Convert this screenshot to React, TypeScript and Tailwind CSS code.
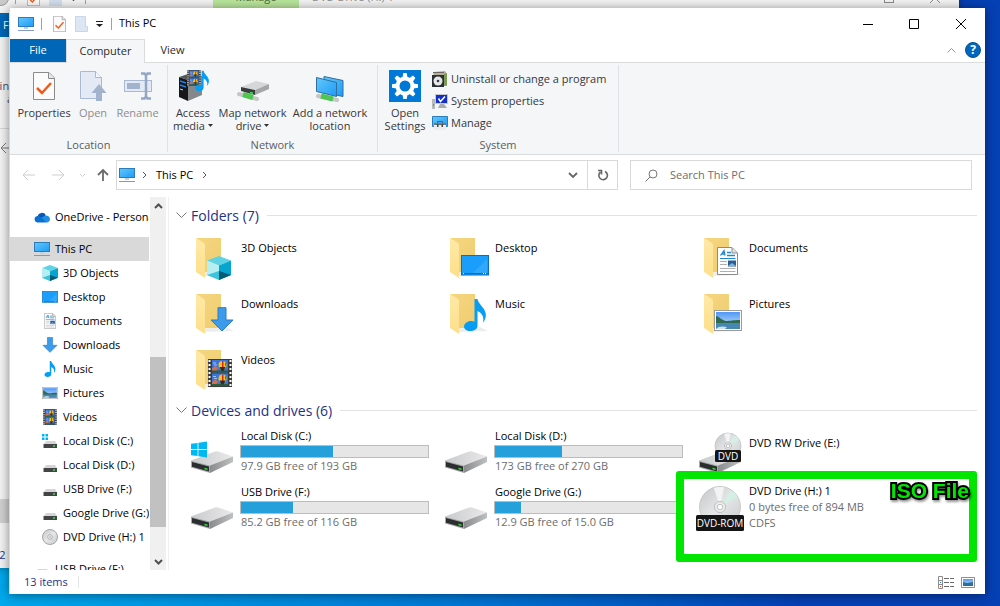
import type { ReactNode, SVGProps } from "react";

type IconProps = SVGProps<SVGSVGElement>;

/* ---------- shared gradients ---------- */

function Gradients() {
  return (
    <svg className="absolute h-0 w-0" aria-hidden="true">
      <defs>
        <linearGradient id="screen" x1="0" y1="0" x2="1" y2="1">
          <stop offset="0" stopColor="#63c8fb" />
          <stop offset="1" stopColor="#1e9bf5" />
        </linearGradient>
        <linearGradient id="folderBack" x1="0" y1="0" x2="1" y2="1">
          <stop offset="0" stopColor="#f5d680" />
          <stop offset="1" stopColor="#efcc70" />
        </linearGradient>
        <linearGradient id="folderFront" x1="0" y1="0" x2="0" y2="1">
          <stop offset="0" stopColor="#ffe9a6" />
          <stop offset="1" stopColor="#fddf8a" />
        </linearGradient>
        <linearGradient id="driveTop" x1="0" y1="0" x2="1" y2="0">
          <stop offset="0" stopColor="#c9cacc" />
          <stop offset="1" stopColor="#e9e9ea" />
        </linearGradient>
        <linearGradient id="driveSide" x1="0" y1="0" x2="1" y2="0">
          <stop offset="0" stopColor="#8a8b8d" />
          <stop offset="1" stopColor="#bfc0c2" />
        </linearGradient>
        <linearGradient id="disc" x1="0" y1="0" x2="1" y2="1">
          <stop offset="0" stopColor="#c4c6c8" />
          <stop offset="0.5" stopColor="#e4e6e7" />
          <stop offset="1" stopColor="#c6c8ca" />
        </linearGradient>
        <linearGradient id="sky" x1="0" y1="0" x2="0" y2="1">
          <stop offset="0" stopColor="#4f97f5" />
          <stop offset="1" stopColor="#d6eafb" />
        </linearGradient>
      </defs>
    </svg>
  );
}

/* ---------- small glyphs ---------- */

function MonitorIcon(props: IconProps) {
  return (
    <svg viewBox="0 0 16 16" width="16" height="16" {...props}>
      <rect x="0.5" y="1.5" width="15" height="9" fill="url(#screen)" stroke="#2b7cb8" />
      <path d="M6 11h4v2H6z" fill="#b9d3e6" />
      <path d="M0 14.5h16" stroke="#7f9cba" />
    </svg>
  );
}

function CheckPageIcon(props: IconProps) {
  return (
    <svg viewBox="0 0 22 28" {...props}>
      <path d="M.5.5h15.500l5.500 5.500v21.500H.5z" fill="#fbfbfb" stroke="#8b8b8b" />
      <path d="M15.500.5v6h6" fill="#e8e8e8" stroke="#8b8b8b" />
      <path d="M4 16l5 5 9-10" fill="none" stroke="#ee5a1c" strokeWidth="2.500" />
    </svg>
  );
}

function OpenPageIcon(props: IconProps) {
  return (
    <svg viewBox="0 0 28 30" {...props}>
      <path d="M1.500.5h15l6 6v21h-21z" fill="#e3eaf5" stroke="#a9b9d4" />
      <path d="M16.500.5v6h6" fill="#f4f7fb" stroke="#a9b9d4" />
      <path d="M20 13l7.500 9H23v8h-6v-8h-4.500z" fill="#a3b2cd" />
    </svg>
  );
}

function RenameIcon(props: IconProps) {
  return (
    <svg viewBox="0 0 28 28" {...props}>
      <rect x="0.5" y="8.500" width="27" height="11" fill="#e3eaf5" stroke="#a9b9d4" />
      <rect x="3" y="11" width="13" height="6" fill="#a3b2cd" />
      <path d="M17 1.500h3.500L22 3.500l1.500-2H27M17 26.500h3.500l1.500-2 1.500 2H27M22 3v22" fill="none" stroke="#94a6c6" strokeWidth="2.500" />
    </svg>
  );
}

function CubeIcon(props: IconProps) {
  return (
    <svg viewBox="0 0 24 24" width="16" height="16" {...props}>
      <path d="M12 0l12 4.500-12 5L0 4.500z" fill="#5fd3e6" />
      <path d="M0 4.500l12 5V24L0 19z" fill="#b5eef3" />
      <path d="M24 4.500l-12 5V24l12-5z" fill="#06a5cf" />
      <path d="M0 19l12-4v9z" fill="#3bc4dc" />
      <path d="M24 19l-12-4v9z" fill="#045c76" />
    </svg>
  );
}

function DesktopIcon(props: IconProps) {
  return (
    <svg viewBox="0 0 28 21" width="16" height="12" {...props}>
      <rect x="0.5" y="0.5" width="27" height="19.500" fill="#1a9dfb" stroke="#0a6fbe" />
      <path d="M12 18L26 4v14z" fill="#3fb0ff" opacity=".6" />
      <path d="M1 18.500h26" stroke="#0a6fbe" />
      <path d="M2 18.500h1M22 18.500h1M24 18.500h1" stroke="#fff" />
    </svg>
  );
}

function DocumentIcon(props: IconProps) {
  return (
    <svg viewBox="0 0 21 28" width="12" height="16" {...props}>
      <path d="M.5.500h14.500l5.500 5.500v21.500H.5z" fill="#fff" stroke="#8a8a8a" />
      <path d="M15 1v5h5" fill="#e4e4e4" stroke="#8a8a8a" />
      <path d="M3.500 8.500L7 3.500l1 5M4.500 7H8M10 5.500h4M10 8.500h8" fill="none" stroke="#2586cf" strokeWidth="1.300" />
      <path d="M3 11.500h15.500" stroke="#2586cf" />
      <rect x="11" y="13.500" width="8" height="6" fill="#2a5f95" />
      <path d="M11 19l4-3 4 3z" fill="#7fb8d8" />
      <path d="M3 14.500h7M3 17.500h7M3 21.500h15.500M3 24.500h15.500" stroke="#b0b0b0" />
    </svg>
  );
}

function DownloadIcon(props: IconProps) {
  return (
    <svg viewBox="0 0 24 25" width="16" height="16" {...props}>
      <path d="M8 .7h8V13h7L12 24 1 13h7z" fill="#3c9bea" stroke="#2a7cc8" />
    </svg>
  );
}

function MusicIcon(props: IconProps) {
  return (
    <svg viewBox="0 0 22 32" width="12" height="16" {...props}>
      <path
        d="M10.500 0h3c.6 5 7.500 8.500 8.300 15 .3 3.600-1 6.700-3 9 1.700-5.500-.6-10-5.300-12V27c0 3-3.500 5-7.300 5C2.500 32 0 30 0 27.500 0 24.500 3.500 22 7 22c1.300 0 2.500.2 3.500.6z"
        fill="#079df5"
      />
    </svg>
  );
}

function PictureIcon(props: IconProps) {
  return (
    <svg viewBox="0 0 28 21" width="16" height="12" {...props}>
      <rect x="0.5" y="0.5" width="27" height="20" fill="#fff" stroke="#9b9b9b" />
      <rect x="2" y="2" width="24" height="17" fill="url(#sky)" />
      <path d="M2 6c3 0 5 4 10 5 4 0 7-1 14-1v4H2z" fill="#2f6a50" />
      <path d="M2 13h24v6H2z" fill="#4688b4" />
      <path d="M2 19c2-3 7-3 11-2l-2 2z" fill="#cfe0ea" />
    </svg>
  );
}

function Balloon({ y }: { y: number }) {
  return (
    <g>
      <rect x="4" y={y} width="16" height="12.500" fill="#3f74d8" />
      <path d={`M4 ${y + 9}l3-3 3 2-2 3H4z`} fill="#dd6f3e" />
      <path d={`M4 ${y + 10.500}h16v2H4z`} fill="#27603f" />
      <circle cx="14.500" cy={y + 5} r="4" fill="#efc51d" />
      <path d={`M14 ${y + 1}h1.500v7H14zM17 ${y + 2}l1.200 2-1.200 3z`} fill="#d4282a" />
      <path d={`M11.500 ${y + 7}h6l-2 4h-2z`} fill="#3a2b20" />
      <path d={`M5 ${y + 3}h3M6 ${y + 5}h3`} stroke="#9fc4f4" />
    </g>
  );
}

function VideoIcon(props: IconProps) {
  return (
    <svg viewBox="0 0 24 28" width="14" height="16" {...props}>
      <path d="M0 0h24v28H0z" fill="#3c3c3c" />
      <Balloon y={1} />
      <Balloon y={14.5} />
      <path d="M1.500 1v26M22.500 1v26" stroke="#fff" strokeWidth="2" strokeDasharray="2 2" />
    </svg>
  );
}

function WindowsLogo(props: IconProps) {
  return (
    <svg viewBox="0 0 16 16" {...props}>
      <path d="M0 2.300l6.600-.9v6.200H0zM7.400 1.300L16 0v7.600H7.400zM0 8.400h6.600v6.200L0 13.700zM7.400 8.400H16V16l-8.600-1.200z" fill="#00b9f2" />
    </svg>
  );
}

function SmallDriveIcon({ system = false }: { system?: boolean }) {
  return (
    <svg viewBox="0 0 16 16" width="16" height="16" aria-hidden="true">
      <path d="M4 8h9l2 3H2z" fill="#d5d6d7" />
      <path d="M1.500 11h13.500v4H1.500z" fill="#434446" />
      <path d="M11 13h2" stroke="#35e04a" strokeWidth="1.500" />
      {system && <path d="M0 1h2.500v2.500H0zM3.500 1H6v2.500H3.500zM0 4.500h2.500V7H0zM3.500 4.500H6V7H3.500z" fill="#00b4f0" />}
    </svg>
  );
}

function SmallDiscIcon() {
  return (
    <svg viewBox="0 0 16 16" width="16" height="16" aria-hidden="true">
      <circle cx="8" cy="8" r="7.500" fill="url(#disc)" stroke="#a4a4a4" />
      <circle cx="8" cy="8" r="2.300" fill="#f4f4f4" stroke="#b0b0b0" />
      <circle cx="8" cy="8" r="0.8" fill="#999" />
    </svg>
  );
}

function CloudIcon() {
  return (
    <svg viewBox="0 0 16 11" width="16" height="11" aria-hidden="true">
      <path d="M3.500 4.200A4.600 4.600 0 0 1 11.800 3L8 8 2 6z" fill="#0a57b5" />
      <path d="M11.500 3.500A4 4 0 0 1 16 7c0 2-1.500 3.500-3.300 3.500L6 6.500z" fill="#1f8fe6" />
      <path d="M3.300 4c2-.3 3.200.5 9.400 6.500H3.400A3.300 3.300 0 0 1 3.300 4z" fill="#0b6fcf" />
    </svg>
  );
}

/* ---------- 48px tile icons ---------- */

function FolderIcon({ children }: { children?: ReactNode }) {
  return (
    <svg viewBox="0 0 48 48" width="48" height="48" aria-hidden="true">
      <path d="M17 44l29-1-8-4H17z" fill="#000" opacity=".07" />
      <path d="M8 6h25v34H17z" fill="url(#folderBack)" />
      <path d="M8 6l8 5q1 .8 1 2.500V46l-9-6z" fill="url(#folderFront)" />
      {children}
    </svg>
  );
}

function DriveShape() {
  return (
    <g>
      <path d="M3 33.500L27 24.500q1.500-.6 3 0L45 29.500 22 38.500z" fill="url(#driveTop)" />
      <path d="M22 38.500l23-9V35L22 46z" fill="url(#driveSide)" />
      <path d="M3 33.500l19 5V46L3 40.500z" fill="#a8a9ab" />
      <path d="M4 35l17 4.500v5L4 39.700z" fill="#2c2d2f" />
      <path d="M16.500 40.800l3 .8v1.400l-3-.8z" fill="#36e23c" />
    </g>
  );
}

function DriveIcon({ system = false }: { system?: boolean }) {
  return (
    <svg viewBox="0 0 48 48" width="48" height="48" aria-hidden="true">
      <DriveShape />
      {system && <WindowsLogo x="3" y="14" width="16" height="17" />}
    </svg>
  );
}

function Disc({ cx, cy, r }: { cx: number; cy: number; r: number }) {
  return (
    <g>
      <circle cx={cx} cy={cy} r={r} fill="url(#disc)" stroke="#bfc1c3" strokeWidth="0.8" />
      <path d={`M${cx} ${cy}L${cx + r * 0.55} ${cy - r * 0.8}A${r} ${r} 0 0 1 ${cx + r * 0.85} ${cy - r * 0.5}z`} fill="#d3f0e2" />
      <path d={`M${cx} ${cy}L${cx - r * 0.3} ${cy - r * 0.93}A${r} ${r} 0 0 1 ${cx + r * 0.2} ${cy - r * 0.96}z`} fill="#f2f3f3" />
      <circle cx={cx} cy={cy} r={r * 0.27} fill="#ececec" stroke="#b5b5b5" strokeWidth="0.8" />
      <circle cx={cx} cy={cy} r={r * 0.13} fill="#fff" stroke="#b5b5b5" strokeWidth="0.8" />
    </g>
  );
}

function DvdDriveIcon() {
  return (
    <svg viewBox="0 0 48 48" width="48" height="48" aria-hidden="true">
      <DriveShape />
      <Disc cx={32} cy={19} r={13} />
      <rect x="19" y="23" width="26" height="12" rx="1.500" fill="#151515" />
      <text x="32" y="33" textAnchor="middle" fontSize="10" fill="#fff" fontFamily="'Open Sans', sans-serif">
        DVD
      </text>
    </svg>
  );
}

function DvdRomIcon() {
  return (
    <svg viewBox="0 0 48 48" width="48" height="48" aria-hidden="true">
      <Disc cx={24} cy={24} r={20.5} />
      <rect x="0" y="32" width="48" height="16" rx="1.500" fill="#151515" />
      <text x="24" y="44" textAnchor="middle" fontSize="10" fill="#fff" fontFamily="'Open Sans', sans-serif">
        DVD-ROM
      </text>
    </svg>
  );
}

/* ---------- ribbon icons ---------- */

function AccessMediaIcon() {
  return (
    <svg viewBox="0 0 32 32" width="32" height="32" aria-hidden="true">
      <path d="M2 7l9 3v21l-9-4z" fill="#15171a" />
      <path d="M11 10l14-4v19l-14 6z" fill="#85888b" />
      <path d="M2 7l12-4 11 3-14 4z" fill="#55585b" />
      <path d="M3 11l6 2M3 15l6 2" stroke="#1f80f0" strokeWidth="1.500" />
      <path d="M3 19l3 1" stroke="#cfd8e0" />
      <VideoIcon x="9" y="0" width="16" height="16" />
      <MusicIcon x="18" y="0" width="14" height="22" />
    </svg>
  );
}

function MapDriveIcon() {
  return (
    <svg viewBox="0 0 32 32" width="32" height="32" aria-hidden="true">
      <path d="M2 24l18 5" stroke="#c4c6c8" strokeWidth="4" strokeLinecap="round" />
      <path d="M6 24.500l10 3" stroke="#4fc64f" strokeWidth="5" />
      <path d="M4 17L19 11l13 3-14 6z" fill="#d6d7d9" />
      <path d="M18 20l14-6v5l-14 6z" fill="#a4a6a8" />
      <path d="M4 17l14 3v5L4 21z" fill="#3a3c3f" />
      <path d="M13 22.500l3 .7" stroke="#3be04a" strokeWidth="1.500" />
    </svg>
  );
}

function AddLocationIcon() {
  return (
    <svg viewBox="0 0 32 32" width="32" height="32" aria-hidden="true">
      <path d="M10 6.500l19 4v16l-19-4z" fill="url(#screen)" stroke="#2f6e9e" />
      <path d="M4 26l19 4" stroke="#c4c6c8" strokeWidth="4" strokeLinecap="round" />
      <path d="M7 26l12 3" stroke="#4fc64f" strokeWidth="5" />
      <path d="M2.500 7.500l20 5v14l-20-5z" fill="url(#screen)" stroke="#2f6e9e" />
    </svg>
  );
}

function SettingsIcon() {
  const teeth = [0, 45, 90, 135, 180, 225, 270, 315];
  return (
    <svg viewBox="0 0 32 32" width="32" height="32" aria-hidden="true">
      <path d="M0 0h32v32H0z" fill="#0078d7" />
      <circle cx="16" cy="16" r="7.500" fill="none" stroke="#fff" strokeWidth="4" />
      {teeth.map((deg) => (
        <path key={deg} d="M13.500 7.500l.8-4.500h3.400l.8 4.500z" fill="#fff" transform={`rotate(${deg} 16 16)`} />
      ))}
    </svg>
  );
}

function UninstallIcon() {
  return (
    <svg viewBox="0 0 16 16" width="16" height="16" aria-hidden="true">
      <path d="M1 1l12-1 2 3v12H4z" fill="#b9ad93" />
      <path d="M12 3l3-1v12l-3 1z" fill="#7c9a55" />
      <path d="M0 4h12v12H0z" fill="#2c2f33" />
      <circle cx="6" cy="10" r="4.500" fill="#e6e8ea" />
      <circle cx="6" cy="10" r="1.300" fill="#34383c" />
      <path d="M1 1.500h11" stroke="#6a6a6a" />
    </svg>
  );
}

function SystemPropsIcon() {
  return (
    <svg viewBox="0 0 16 16" width="16" height="16" aria-hidden="true">
      <path d="M0 6h3v10H0z" fill="#b7babd" />
      <path d="M1 12h1" stroke="#38c048" strokeWidth="2" />
      <path d="M3.500 1.500h12v9h-12z" fill="#1430c4" stroke="#c6c9cc" />
      <path d="M6.500 5.500l2 3L13 3.500" fill="none" stroke="#fff" strokeWidth="1.500" />
      <path d="M8 11h4l3 4H6z" fill="#a9acaf" />
    </svg>
  );
}

function ManageIcon() {
  return (
    <svg viewBox="0 0 16 16" width="16" height="16" aria-hidden="true">
      <path d="M.5 1.500h15v10H.5z" fill="url(#screen)" stroke="#2b7cb8" />
      <path d="M5.500 8V6.500h5V8" fill="none" stroke="#5c5f62" />
      <path d="M2 8h12v7H2z" fill="#74777a" />
      <path d="M2 10h12v5H2z" fill="#eceded" />
      <path d="M5 9h1.500v3H5zM9.500 9H11v3H9.500z" fill="#45484b" />
    </svg>
  );
}

function Chevron({ className, d = "M1 1l4 4 4-4", w = 10, h = 6 }: { className?: string; d?: string; w?: number; h?: number }) {
  return (
    <svg className={className} viewBox={`0 0 ${w} ${h}`} width={w} height={h} fill="none" stroke="currentColor" aria-hidden="true">
      <path d={d} />
    </svg>
  );
}

/* ---------- window parts ---------- */

function TitleBar({ title }: { title: string }) {
  return (
    <header className="flex h-[31px] shrink-0 items-center pl-2">
      <MonitorIcon className="shrink-0" />
      <span className="ml-[7px] h-3 w-px bg-gray-400" />
      <button type="button" aria-label="Properties" className="ml-[11px]">
        <CheckPageIcon width="13" height="16" />
      </button>
      <button type="button" aria-label="New folder" className="ml-[9px]">
        <svg viewBox="0 0 13 16" width="13" height="16" aria-hidden="true">
          <path d="M.5.5h10v10h2v5H.5z" fill="#dde6f3" stroke="#c9d6ea" />
        </svg>
      </button>
      <button type="button" aria-label="Customize toolbar" className="ml-2">
        <svg viewBox="0 0 7 6" width="7" height="6" aria-hidden="true">
          <path d="M0 0h7v1H0zM0 3h7L3.500 6z" fill="#222" />
        </svg>
      </button>
      <span className="ml-2 h-3 w-px bg-gray-400" />
      <h1 className="ml-[7px] text-[11px] whitespace-nowrap text-black">{title}</h1>
      <div className="ml-auto flex h-full">
        <button type="button" aria-label="Minimize" className="grid w-[46px] place-items-center">
          <Chevron d="M0 5.500h10" h={10} />
        </button>
        <button type="button" aria-label="Maximize" className="grid w-[46px] place-items-center">
          <Chevron d="M.5.5h9v9h-9z" h={10} />
        </button>
        <button type="button" aria-label="Close" className="grid w-12 place-items-center">
          <Chevron d="M0 0l10 10M10 0L0 10" h={10} />
        </button>
      </div>
    </header>
  );
}

function BigButton({ icon, lines, menu, className }: { icon: ReactNode; lines: string[]; menu?: boolean; className: string }) {
  return (
    <button type="button" className={`flex flex-col items-center pt-[3px] ${className}`}>
      <span className="grid h-8 w-8 place-items-center">{icon}</span>
      <span className="mt-1 flex flex-col items-center text-[11px] leading-[13px] whitespace-nowrap">
        {lines.map((line, i) => (
          <span key={line} className="flex items-center">
            {line}
            {menu && i === lines.length - 1 && (
              <svg className="ml-[3px]" viewBox="0 0 5 3" width="5" height="3" aria-hidden="true">
                <path d="M0 0h5L2.500 3z" fill="#333" />
              </svg>
            )}
          </span>
        ))}
      </span>
    </button>
  );
}

function RibbonGroup({ label, className, children }: { label: string; className: string; children: ReactNode }) {
  return (
    <section className={`flex shrink-0 flex-col pt-1 ${className}`}>
      <div className="flex flex-1">{children}</div>
      <h2 className="text-center text-[11px] leading-[18px] text-[#5a5d61]">{label}</h2>
    </section>
  );
}

function GroupDivider() {
  return <span className="my-[2px] w-px shrink-0 bg-[#dfe1e4]" />;
}

const systemLinks = [
  { label: "Uninstall or change a program", icon: <UninstallIcon /> },
  { label: "System properties", icon: <SystemPropsIcon /> },
  { label: "Manage", icon: <ManageIcon /> },
];

function Ribbon() {
  return (
    <div className="flex h-[92px] shrink-0 border-b border-[#dadbdc] bg-[#f5f6f7] text-[#35383c]">
      <RibbonGroup label="Location" className="w-[157px] px-[6px]">
        <BigButton className="w-14" icon={<CheckPageIcon width="22" height="28" />} lines={["Properties"]} />
        <BigButton className="w-[42px] text-[#8b8d91]" icon={<OpenPageIcon width="28" height="30" />} lines={["Open"]} />
        <BigButton className="w-[47px] text-[#8b8d91]" icon={<RenameIcon width="28" height="28" />} lines={["Rename"]} />
      </RibbonGroup>
      <GroupDivider />
      <RibbonGroup label="Network" className="w-[209px] px-[3px]">
        <BigButton className="w-11" icon={<AccessMediaIcon />} lines={["Access", "media"]} menu />
        <BigButton className="w-[75px]" icon={<MapDriveIcon />} lines={["Map network", "drive"]} menu />
        <BigButton className="w-20" icon={<AddLocationIcon />} lines={["Add a network", "location"]} />
      </RibbonGroup>
      <GroupDivider />
      <RibbonGroup label="System" className="w-[240px] px-[6px]">
        <BigButton className="w-[42px]" icon={<SettingsIcon />} lines={["Open", "Settings"]} />
        <ul className="mt-px ml-[6px]">
          {systemLinks.map((l) => (
            <li key={l.label}>
              <button type="button" className="flex h-[22px] items-center gap-[3px] text-[11px] whitespace-nowrap">
                {l.icon}
                {l.label}
              </button>
            </li>
          ))}
        </ul>
      </RibbonGroup>
      <GroupDivider />
    </div>
  );
}

function NavBar() {
  return (
    <div className="flex h-[42px] shrink-0 items-start pt-[5px] pr-[13px] pl-3 text-[11px]">
      <div className="flex h-[30px] w-[94px] shrink-0 items-center text-[#6b6b6b]">
        <button type="button" aria-label="Back" className="text-[#cfcfcf]">
          <Chevron d="M13 6H1M6 1L1 6l5 5" w={14} h={12} />
        </button>
        <button type="button" aria-label="Forward" className="ml-4 text-[#cfcfcf]">
          <Chevron d="M0 6h12M7 1l5 5-5 5" w={14} h={12} />
        </button>
        <button type="button" aria-label="Recent locations" className="ml-[13px] text-[#cfcfcf]">
          <Chevron d="M1 1l2.500 2.500L6 1" w={7} h={5} />
        </button>
        <button type="button" aria-label="Up" className="ml-[10px]">
          <svg viewBox="0 0 14 14" width="14" height="14" fill="none" stroke="currentColor" strokeWidth="1.800" aria-hidden="true">
            <path d="M7 13V2M2 7l5-5 5 5" />
          </svg>
        </button>
      </div>
      <div className="flex h-[30px] min-w-0 flex-[498] items-center border border-[#d9d9d9] pl-[2px]">
        <MonitorIcon className="shrink-0" />
        <Chevron className="ml-[7px] text-[#555]" d="M1 1l3 3-3 3" w={5} h={8} />
        <a href="#this-pc" className="ml-[9px] text-black">This PC</a>
        <Chevron className="ml-[9px] text-[#555]" d="M1 1l3 3-3 3" w={5} h={8} />
        <button type="button" aria-label="Previous locations" className="ml-auto grid h-full w-7 place-items-center text-[#666]">
          <svg viewBox="0 0 10 6" width="10" height="6" fill="none" stroke="currentColor" strokeWidth="1.800" aria-hidden="true">
            <path d="M1 1l4 4 4-4" />
          </svg>
        </button>
        <button type="button" aria-label="Refresh" className="grid h-full w-[30px] place-items-center border-l border-[#d9d9d9] text-[#666]">
          <svg viewBox="0 0 12 12" width="12" height="12" fill="none" stroke="currentColor" strokeWidth="1.600" aria-hidden="true">
            <path d="M8 2.500A4.300 4.300 0 1 1 3.500 3" />
            <path d="M1 1.500h3.500V5.500" />
          </svg>
        </button>
      </div>
      <label className="ml-3 flex h-[30px] min-w-0 flex-[326] items-center border border-[#d9d9d9] pl-[14px] text-[#777]">
        <svg viewBox="0 0 13 13" width="13" height="13" fill="none" stroke="currentColor" aria-hidden="true">
          <circle cx="8" cy="5" r="4" />
          <path d="M5 8l-4.500 4.500" />
        </svg>
        <input type="search" aria-label="Search This PC" placeholder="Search This PC" className="ml-3 min-w-0 flex-1 bg-transparent outline-none placeholder:text-[#6d6d6d]" />
      </label>
    </div>
  );
}

const pcItems = [
  { label: "3D Objects", icon: <CubeIcon /> },
  { label: "Desktop", icon: <DesktopIcon /> },
  { label: "Documents", icon: <DocumentIcon /> },
  { label: "Downloads", icon: <DownloadIcon /> },
  { label: "Music", icon: <MusicIcon /> },
  { label: "Pictures", icon: <PictureIcon /> },
  { label: "Videos", icon: <VideoIcon /> },
  { label: "Local Disk (C:)", icon: <SmallDriveIcon system /> },
  { label: "Local Disk (D:)", icon: <SmallDriveIcon /> },
  { label: "USB Drive (F:)", icon: <SmallDriveIcon /> },
  { label: "Google Drive (G:)", icon: <SmallDriveIcon /> },
  { label: "DVD Drive (H:) 1", icon: <SmallDiscIcon /> },
];

function TreeItem({ icon, label, className }: { icon: ReactNode; label: string; className: string }) {
  return (
    <a href="#item" className={`flex h-6 items-center gap-[5px] text-[11px] whitespace-nowrap text-black ${className}`}>
      <span className="grid h-4 w-4 shrink-0 place-items-center">{icon}</span>
      {label}
    </a>
  );
}

function Sidebar() {
  return (
    <aside className="flex w-[159px] shrink-0 border-r border-[#f0f0f0]">
      <nav className="w-[139px] overflow-hidden pt-2">
        <TreeItem icon={<CloudIcon />} label="OneDrive - Personal" className="pl-6" />
        <div className="mt-2">
          <TreeItem icon={<MonitorIcon />} label="This PC" className="bg-[#d9d9d9] pl-6" />
          {pcItems.map((item) => (
            <TreeItem key={item.label} icon={item.icon} label={item.label} className="pl-8" />
          ))}
        </div>
        <TreeItem icon={<SmallDriveIcon />} label="USB Drive (F:)" className="mt-2 pl-6" />
      </nav>
      {/* scroll bar */}
      <div className="ml-px flex w-4 flex-col items-center bg-[#f0f0f0] text-[#505050]">
        <span className="grid h-[17px] place-items-center">
          <svg viewBox="0 0 9 6" width="9" height="6" fill="none" stroke="currentColor" strokeWidth="2" aria-hidden="true">
            <path d="M1 5l3.500-3.500L8 5" />
          </svg>
        </span>
        <span className="flex-[143]" />
        <span className="w-full flex-[170] bg-[#c1c1c1]" />
        <span className="flex-[26]" />
        <span className="grid h-[17px] place-items-center">
          <svg viewBox="0 0 9 6" width="9" height="6" fill="none" stroke="currentColor" strokeWidth="2" aria-hidden="true">
            <path d="M1 1l3.500 3.500L8 1" />
          </svg>
        </span>
      </div>
    </aside>
  );
}

function SectionHeader({ children }: { children: ReactNode }) {
  return (
    <h2 className="flex h-6 items-center pr-2 pl-[7px] text-[14px] whitespace-nowrap text-[#1e3287]">
      <Chevron className="mr-1 text-[#777]" d="M.5.5l5 5 5-5" w={11} h={7} />
      {children}
      <span className="ml-2 h-px flex-1 bg-[#e2e2e2]" />
    </h2>
  );
}

const folders = [
  { name: "3D Objects", overlay: <CubeIcon x="19" y="24" width="24" height="24" /> },
  { name: "Desktop", overlay: <DesktopIcon x="19" y="23" width="28" height="21" /> },
  { name: "Documents", overlay: <DocumentIcon x="21" y="15" width="21" height="28" /> },
  { name: "Downloads", overlay: <DownloadIcon x="22" y="19" width="24" height="25" /> },
  { name: "Music", overlay: <MusicIcon x="22" y="11" width="22" height="32" /> },
  { name: "Pictures", overlay: <PictureIcon x="18" y="22" width="28" height="21" /> },
  { name: "Videos", overlay: <VideoIcon x="20" y="15" width="24" height="28" /> },
];

const drives = [
  { name: "Local Disk (C:)", used: 49, detail: "97.9 GB free of 193 GB", icon: <DriveIcon system /> },
  { name: "Local Disk (D:)", used: 36, detail: "173 GB free of 270 GB", icon: <DriveIcon /> },
  { name: "DVD RW Drive (E:)", icon: <DvdDriveIcon /> },
  { name: "USB Drive (F:)", used: 28, detail: "85.2 GB free of 116 GB", icon: <DriveIcon /> },
  { name: "Google Drive (G:)", used: 14, detail: "12.9 GB free of 15.0 GB", icon: <DriveIcon /> },
  { name: "DVD Drive (H:) 1", detail: "0 bytes free of 894 MB", fs: "CDFS", icon: <DvdRomIcon />, marked: true },
];

function IsoMarker() {
  return (
    <div className="pointer-events-none absolute -top-2 -left-5 h-[91px] w-[301px] rounded-[3px] border-8 border-[#00e600]">
      <span className="absolute top-0 right-0 font-['Liberation_Sans',sans-serif] text-[21px] leading-6 font-bold whitespace-nowrap text-[#00e600] [-webkit-text-stroke:4px_#000] [paint-order:stroke_fill] drop-shadow-[1px_2px_1px_rgba(0,0,0,0.4)]">
        ISO File
      </span>
    </div>
  );
}

function Content() {
  return (
    <main className="min-w-0 flex-1 pt-[6px]">
      <SectionHeader>Folders (7)</SectionHeader>
      <ul className="mt-px grid grid-cols-[repeat(auto-fill,254px)] pl-[19px]">
        {folders.map((f) => (
          <li key={f.name} className="flex h-14 items-center gap-[5px]">
            <FolderIcon>{f.overlay}</FolderIcon>
            <span className="h-8 text-[11px] leading-4 text-black">{f.name}</span>
          </li>
        ))}
      </ul>
      <div className="mt-[2px]">
        <SectionHeader>Devices and drives (6)</SectionHeader>
      </div>
      <ul className="mt-px grid grid-cols-[repeat(auto-fill,254px)] pl-[19px]">
        {drives.map((d) => (
          <li key={d.name} className="relative flex h-14 items-center gap-1">
            <span className="shrink-0">{d.icon}</span>
            <div className="w-[189px] text-[11px] leading-4">
              <p className="pl-px text-black">{d.name}</p>
              {d.used !== undefined && (
                <div className="mt-px h-[13px] border border-[#bcbcbc] bg-[#e6e6e6]">
                  <div className="h-full bg-[#26a0da]" style={{ width: `${d.used}%` }} />
                </div>
              )}
              <p className="min-h-4 pl-px text-[#6d6d6d]">{d.detail}</p>
              {d.fs && <p className="pl-px text-[#6d6d6d]">{d.fs}</p>}
            </div>
            {d.marked && <IsoMarker />}
          </li>
        ))}
      </ul>
    </main>
  );
}

function StatusBar() {
  return (
    <footer className="flex h-6 shrink-0 items-center pr-[10px] pl-[14px] text-[11px] text-[#1e3287]">
      <span>13 items</span>
      <span className="ml-[10px] h-3 w-px bg-[#e5e5e5]" />
      <button type="button" aria-label="Details view" className="ml-auto">
        <svg viewBox="0 0 17 13" width="17" height="13" fill="none" aria-hidden="true">
          <path d="M.5.5h4v12h-4zM.5 4.500h4M.5 8.500h4" stroke="#8d8d8d" />
          <path d="M6 2.500h5M12 2.500h4M6 6.500h5M12 6.500h4M6 10.500h5M12 10.500h4" stroke="#6b6b6b" />
          <path d="M2 6.500h1" stroke="#2a7de1" />
          <path d="M2 10.500h1" stroke="#e0531c" />
        </svg>
      </button>
      <button type="button" aria-label="Large icons view" className="ml-[6px]">
        <svg viewBox="0 0 14 11" width="14" height="11" aria-hidden="true">
          <path d="M.5.5h13v10H.5z" fill="#fff" stroke="#8d8d8d" />
          <path d="M2 2h10v7H2z" fill="url(#sky)" />
          <path d="M2 5l4 1 6-1v4H2z" fill="#2b6f9e" />
        </svg>
      </button>
    </footer>
  );
}

/* Inactive window that peeks out behind the main one */
function BackWindow() {
  return (
    <div className="absolute top-[-18px] right-[41px] bottom-[38px] left-[-17px] overflow-hidden border-l border-gray-300 bg-[#f3f3f3] shadow-[0_0_8px_rgba(0,0,0,0.35)]" aria-hidden="true">
      <div className="flex h-[31px] items-center text-[11px] text-[#8a8a8a]">
        <svg className="ml-[9px]" viewBox="0 0 16 16" width="16" height="16">
          <circle cx="8" cy="8" r="7.500" fill="#c9c9c9" stroke="#999" />
        </svg>
        <span className="ml-[6px] h-3 w-px bg-gray-400" />
        <CheckPageIcon className="ml-[11px]" width="13" height="16" />
        <span className="ml-[9px] h-4 w-[13px] bg-[#d3deee]" />
        <svg className="ml-2" viewBox="0 0 7 6" width="7" height="6">
          <path d="M0 3h7L3.500 6z" fill="#222" />
        </svg>
        <span className="ml-2 h-3 w-px bg-gray-400" />
        <span className="ml-[127px] grid h-full w-[86px] place-items-center bg-[#b8e69c] text-[#4e6b3c]">Manage</span>
        <span className="ml-[13px]">DVD Drive (H:) 1</span>
        <span className="mr-[36px] ml-auto h-[10px] w-[10px] border border-[#8a8a8a]" />
        <Chevron className="mr-[19px]" d="M0 0l10 10M10 0L0 10" h={10} />
      </div>
      <div className="flex h-6 w-14 items-center pl-[19px] bg-[#0067b8] text-[11px] text-white">File</div>
      <div className="h-[92px] border-b border-[#d5d5d5] pt-[42px] pl-[9px] text-[11px] leading-[13px] text-[#4a4a6a]">
        <p>Pin</p>
        <p className="pl-[14px]">a</p>
      </div>
      <Chevron className="mt-[13px] ml-4 text-[#777]" d="M13 6H1M6 1L1 6l5 5" w={14} h={12} />
      <div className="mt-[345px] h-6 w-20 bg-[#d0d0d0]" />
      <p className="mt-6 pl-[9px] text-[11px] leading-4 text-[#1e3287]">12 items</p>
    </div>
  );
}

export default function App() {
  return (
    <div className="relative h-screen overflow-hidden bg-linear-to-r from-[#00a8ec] via-[#0277d4] via-45% to-[#0540b4] to-80% font-['Open_Sans','Noto_Sans',sans-serif]">
      <Gradients />
      <BackWindow />
      <div className="absolute top-2 right-[15px] bottom-3 left-[9px] flex flex-col overflow-hidden border-l border-[#d4d8dc] bg-white shadow-[0_1px_10px_rgba(0,0,0,0.45)]">
        <TitleBar title="This PC" />
        <div className="flex h-6 shrink-0 border-b border-[#dadbdc] text-[11px]">
          <button type="button" className="h-[23px] w-14 bg-[#0067b8] text-white">File</button>
          <button type="button" className="h-6 w-[79px] border border-b-0 border-[#dadbdc] bg-[#f5f6f7] text-[#2b2b2b]">Computer</button>
          <button type="button" className="h-[23px] w-[55px] text-[#2b2b2b]">View</button>
          <button type="button" aria-label="Collapse the ribbon" className="mr-[9px] ml-auto text-[#999]">
            <Chevron d="M.5 5.500l4-4 4 4" w={9} h={7} />
          </button>
          <button type="button" aria-label="Help" className="mt-[3px] mr-1 h-4 w-4 rounded-full border border-[#0b4f8f] bg-[#0067c0] text-[12px] leading-[14px] font-bold text-white">
            ?
          </button>
        </div>
        <Ribbon />
        <NavBar />
        <div className="flex min-h-0 flex-1 overflow-hidden">
          <Sidebar />
          <Content />
        </div>
        <StatusBar />
      </div>
    </div>
  );
}
